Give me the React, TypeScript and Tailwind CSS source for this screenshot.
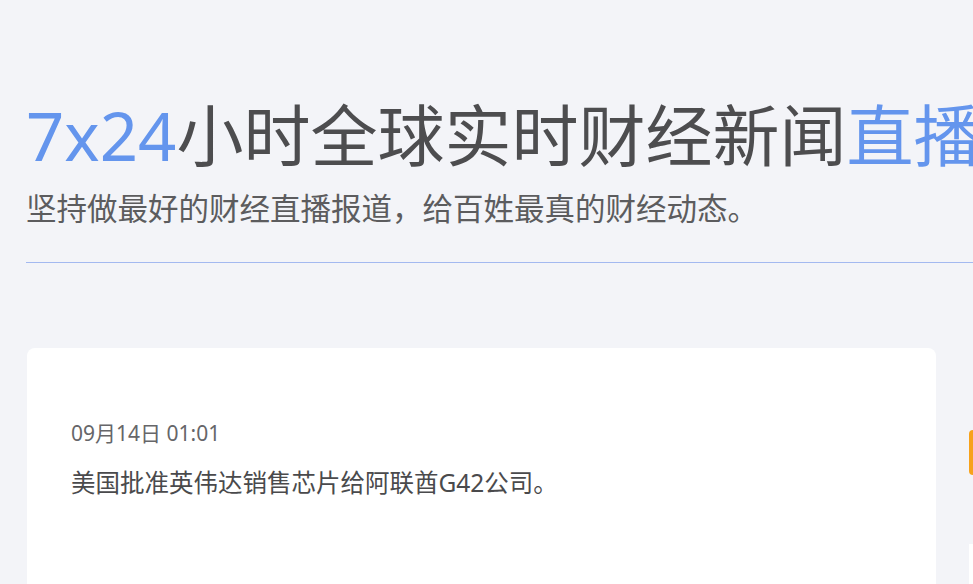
import React from "react";

export default function App() {
  return (
    <div
      className="w-[973px] h-[584px] overflow-hidden bg-[#f3f4f8]"
      style={{ fontFamily: '"Noto Sans", "Noto Sans CJK SC", sans-serif' }}
    >
      <div className="w-[1400px] pl-[26px] pt-[102px]">
        <h1 className="text-[67px] leading-none text-[#4d4d4f] whitespace-nowrap font-normal">
          <span className="text-[#6495ed]">7x24</span>
          小时全球实时财经新闻
          <span className="text-[#6495ed]">直播</span>
        </h1>
        <p className="mt-[24px] text-[30.5px] leading-none text-[#5c5c5e] whitespace-nowrap">
          坚持做最好的财经直播报道，给百姓最真的财经动态。
        </p>
        <div className="mt-[38px] h-px bg-[#a3b9f0]"></div>

        <div className="mt-[85px] flex gap-[33px]">
          <div className="ml-px w-[909px] h-[300px] shrink-0 rounded-lg bg-white pl-[44px] pt-[75px]">
            <div className="text-[21px] leading-none text-[#666669]">09月14日 01:01</div>
            <div className="mt-[27px] text-[24.5px] leading-none text-[#4a4a4c]">
              美国批准英伟达销售芯片给阿联酋G42公司。
            </div>
          </div>
          <div className="w-[300px] shrink-0 flex flex-col">
            <div className="mt-[82px] h-[45px] rounded-l bg-[#f7a21b]"></div>
            <div className="mt-[69px] h-[200px] bg-white"></div>
          </div>
        </div>
      </div>
    </div>
  );
}
